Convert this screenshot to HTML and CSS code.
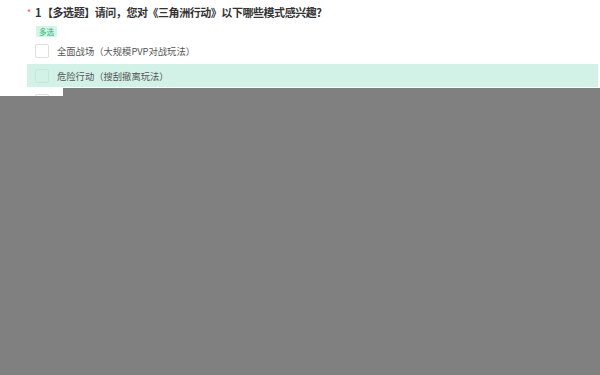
FILE: index.html
```html
<!DOCTYPE html>
<html lang="zh-CN">
<head>
<meta charset="utf-8">
<title>问卷</title>
<link rel="stylesheet" href="styles.css">
</head>
<body>
<div class="page">
  <div class="question">
    <div class="title"><span class="req">*</span><span class="num">1</span><span class="text">【多选题】请问，您对《三角洲行动》以下哪些模式感兴趣?</span></div>
    <div class="tag-row"><span class="tag">多选</span></div>
    <div class="options">
      <div class="option"><span class="box"></span><span class="label">全面战场（大规模PVP对战玩法）</span></div>
      <div class="option active"><span class="box"></span><span class="label">危险行动（搜刮撤离玩法）</span></div>
      <div class="option"><span class="box"></span><span class="label">其他模式</span></div>
    </div>
  </div>
  <div class="overlay"></div>
</div>
</body>
</html>
```

FILE: styles.css
```css
html, body {
  margin: 0;
  padding: 0;
  background: #ffffff;
}
.page {
  position: relative;
  width: 600px;
  height: 375px;
  overflow: hidden;
  font-family: "Noto Sans CJK SC", "Noto Sans", sans-serif;
}
.question {
  padding-top: 5px;
}
.title {
  display: flex;
  align-items: center;
  height: 14px;
  padding-left: 27px;
  font-size: 11px;
  font-weight: bold;
  color: #333333;
  line-height: 14px;
}
.req {
  color: #f2545b;
  font-size: 9px;
  font-weight: normal;
  width: 8px;
  position: relative;
  top: 1px;
}
.num {
  width: 7px;
}
.text {
  letter-spacing: -0.45px;
}
.tag-row {
  display: flex;
  padding-left: 36px;
  margin-top: 7px;
}
.tag {
  display: inline-flex;
  align-items: center;
  justify-content: center;
  width: 21px;
  height: 11px;
  background: #d3f4e6;
  color: #2fb57a;
  font-size: 7.5px;
  line-height: 11px;
  border-radius: 1px;
}
.options {
  display: flex;
  flex-direction: column;
  gap: 2px;
  margin: 2px 2px 0 27px;
}
.option {
  display: flex;
  align-items: center;
  height: 23px;
  padding-left: 8px;
}
.option.active {
  background: #d2f2e8;
}
.box {
  width: 12px;
  height: 12px;
  border: 1px solid #dcdfe3;
  border-radius: 2px;
  background: #ffffff;
  flex: none;
}
.option.active .box {
  background: #d2f2e8;
  border-color: #c6e8dc;
}
.label {
  margin-left: 8px;
  font-size: 9.3px;
  color: #555555;
}
.overlay {
  position: absolute;
  left: 0;
  top: 0;
  width: 600px;
  height: 375px;
  background: #808080;
  clip-path: polygon(63px 88px, 600px 88px, 600px 375px, 0 375px, 0 96px, 63px 96px);
}
```
